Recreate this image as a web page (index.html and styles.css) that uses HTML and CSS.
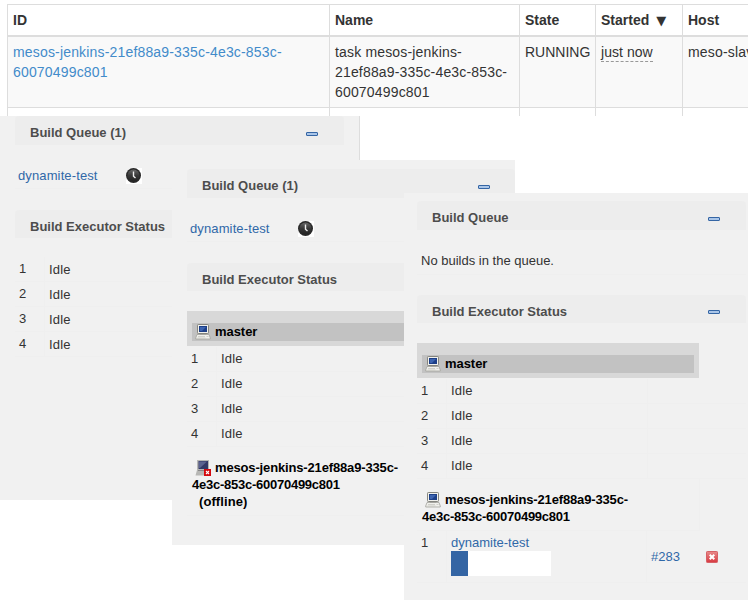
FILE: index.html
```html
<!DOCTYPE html>
<html lang="en">
<head>
<meta charset="utf-8">
<title>Mesos tasks and Jenkins executors</title>
<link rel="stylesheet" href="styles.css">
</head>
<body>
<svg class="defs" width="0" height="0">
  <defs>
    <linearGradient id="face" x1="0" y1="0" x2="0" y2="1"><stop offset="0" stop-color="#666"/><stop offset=".5" stop-color="#383838"/><stop offset="1" stop-color="#222"/></linearGradient>
    <linearGradient id="red" x1="0" y1="0" x2="0" y2="1"><stop offset="0" stop-color="#e88b8b"/><stop offset="1" stop-color="#d73840"/></linearGradient>
    <symbol id="clock" viewBox="0 0 16 16">
      <path d="M8 0h8v16H8z" fill="#fff"/><path d="M0 12h8v4H0z" fill="#fff"/>
      <circle cx="7.5" cy="7.5" r="7.5" fill="#292929"/><circle cx="7.5" cy="7.5" r="6" fill="url(#face)"/>
      <path d="M7.5 3.5v4.8l2 1.7" fill="none" stroke="#eee" stroke-width="1.4"/>
    </symbol>
    <symbol id="pc" viewBox="0 0 16 16">
      <rect x="2.5" y=".5" width="11" height="9" rx=".8" fill="#f1f1ec" stroke="#85857f"/>
      <rect x="4" y="2" width="8" height="6" fill="#1d3f88"/><path d="M5 3h6L7 7H5z" fill="#3d64b0"/>
      <path d="M5 10h6v1H5z" fill="#777"/>
      <path d="M2 10.500h12l1.300 3.500v1H.700v-1z" fill="#f0f0ec" stroke="#a2a29c" stroke-width=".8"/>
      <path d="M3 12.500h7M2.500 14h8M11.500 12.500h2" stroke="#c8c8c2" stroke-width=".8"/>
    </symbol>
    <symbol id="pc-off" viewBox="0 0 16 16">
      <path d="M2 0h12v10l1.500 5.500H.5L2 10z" fill="#b7b7b5"/>
      <rect x="3.500" y="1" width="9.500" height="8" fill="#343966"/><path d="M4 1.500h8L5 8H4z" fill="#5c638f"/>
      <path d="M3 10.500h7" stroke="#888" stroke-width="1"/>
      <rect x="9" y="9" width="7" height="7" fill="#d4080e"/><path d="M11 11l3 3m0-3l-3 3" stroke="#fff" stroke-width="1.100"/>
    </symbol>
    <symbol id="minus" viewBox="0 0 12 4">
      <rect x=".5" y=".5" width="11" height="3" rx=".4" fill="#a9c5e8" stroke="#3465a4"/>
    </symbol>
    <symbol id="stop" viewBox="0 0 12 12">
      <rect x=".5" y=".5" width="11" height="11" rx=".8" fill="url(#red)" stroke="#d66166"/>
      <path d="M3.700 3.700l4.600 4.600m0-4.600L3.700 8.300" stroke="#fff" stroke-width="2"/>
    </symbol>
  </defs>
</svg>

<div class="stage">
  <div class="tasks">
    <div class="th">ID</div><div class="th">Name</div><div class="th">State</div><div class="th">Started <span class="sort">▼</span></div><div class="th">Host</div>
    <div class="td"><a class="task-link">mesos-jenkins-21ef88a9-335c-4e3c-853c-<br>60070499c801</a></div>
    <div class="td">task mesos-jenkins-<br>21ef88a9-335c-4e3c-853c-<br>60070499c801</div>
    <div class="td state">RUNNING</div>
    <div class="td"><span class="ago">just now</span></div>
    <div class="td">meso-slav</div>
    <div class="next"></div><div class="next"></div><div class="next"></div><div class="next"></div><div class="next"></div>
  </div>

  <section class="panel first">
    <h2 class="bar queue">Build Queue (1)<svg class="minus"><use href="#minus"/></svg></h2>
    <div class="job"><a>dynamite-test</a><svg class="clock"><use href="#clock"/></svg></div>
    <h2 class="bar status">Build Executor Status</h2>
    <div class="slots">
      <div class="slot"><span class="num">1</span><span class="what">Idle</span></div>
      <div class="slot"><span class="num">2</span><span class="what">Idle</span></div>
      <div class="slot"><span class="num">3</span><span class="what">Idle</span></div>
      <div class="slot"><span class="num">4</span><span class="what">Idle</span></div>
    </div>
  </section>

  <section class="panel second">
    <h2 class="bar queue">Build Queue (1)<svg class="minus"><use href="#minus"/></svg></h2>
    <div class="job"><a>dynamite-test</a><svg class="clock"><use href="#clock"/></svg></div>
    <h2 class="bar status">Build Executor Status</h2>
    <div class="master"><div class="master-name"><svg class="pc"><use href="#pc"/></svg><span>master</span></div></div>
    <div class="slots">
      <div class="slot"><span class="num">1</span><span class="what">Idle</span></div>
      <div class="slot"><span class="num">2</span><span class="what">Idle</span></div>
      <div class="slot"><span class="num">3</span><span class="what">Idle</span></div>
      <div class="slot"><span class="num">4</span><span class="what">Idle</span></div>
    </div>
    <div class="node"><svg class="pc"><use href="#pc-off"/></svg>mesos-jenkins-21ef88a9-335c-<br><span class="tail">4e3c-853c-60070499c801</span><br><span class="offline">(offline)</span></div>
  </section>

  <section class="panel third">
    <h2 class="bar queue">Build Queue<svg class="minus"><use href="#minus"/></svg></h2>
    <div class="job empty">No builds in the queue.</div>
    <h2 class="bar status">Build Executor Status<svg class="minus"><use href="#minus"/></svg></h2>
    <div class="master"><div class="master-name"><svg class="pc"><use href="#pc"/></svg><span>master</span></div></div>
    <div class="slots">
      <div class="slot"><span class="num">1</span><span class="what">Idle</span><span class="rest"></span></div>
      <div class="slot"><span class="num">2</span><span class="what">Idle</span><span class="rest"></span></div>
      <div class="slot"><span class="num">3</span><span class="what">Idle</span><span class="rest"></span></div>
      <div class="slot"><span class="num">4</span><span class="what">Idle</span><span class="rest"></span></div>
    </div>
    <div class="node"><svg class="pc"><use href="#pc"/></svg>mesos-jenkins-21ef88a9-335c-<br><span class="tail">4e3c-853c-60070499c801</span></div>
    <div class="slot running">
      <span class="num">1</span>
      <div class="what"><a>dynamite-test</a><div class="progress"><div class="done"></div></div></div>
      <div class="rest"><a class="build">#283</a><svg class="stop"><use href="#stop"/></svg></div>
    </div>
  </section>
</div>
</body>
</html>
```
FILE: styles.css
```css
* { box-sizing: border-box; }
body { margin: 0; background: #fff; font-family: "Liberation Sans", Arial, sans-serif; color: #333; }
svg { display: block; flex: none; }
.defs { position: absolute; }
.stage { position: relative; width: 748px; height: 600px; overflow: hidden; }

.tasks { display: grid; grid-template-columns: 322px 190px 76px 87px 120px; grid-template-rows: 33px 71px 8px; margin-left: 7px; padding-top: 4px; height: 116px; font-size: 14px; line-height: 20px; white-space: nowrap; }
.th { border: solid #ddd; border-width: 1px 0 2px 1px; padding: 5px 5px; font-weight: bold; }
.td { border: solid #ddd; border-width: 0 0 1px 1px; padding: 5px 5px; background: #f9f9f9; letter-spacing: .17px; }
.next { border-left: 1px solid #ddd; }
.state { letter-spacing: 0; }
.task-link { color: #428bca; }
.sort { font: 13px/16px "DejaVu Sans", sans-serif; margin-left: 3px; }
.ago { display: inline-block; height: 20px; border-bottom: 1px dashed #999; letter-spacing: .05px; }

.panel { position: absolute; display: flex; flex-direction: column; background: #f1f1f1; font-size: 13px; line-height: 17px; }
.first { left: 0; top: 116px; width: 360px; height: 384px; padding: 0 15px; border-right: 1px solid #ddd; }
.second { left: 172px; top: 160px; width: 343px; height: 385px; padding: 9px 0 0 15px; }
.third { left: 404px; top: 193px; width: 344px; height: 407px; padding: 8px 2px 0 13px; }
.panel a { color: #3068a8; letter-spacing: .12px; }

.bar { display: flex; align-items: center; justify-content: space-between; margin: 0; height: 29px; padding: 5px 26px 0 15px; background: #ededed; border-radius: 4px 4px 0 0; color: #4d4d4d; font-size: 13px; line-height: 17px; }
.queue { padding-top: 3px; }
.status { height: 28px; }
.minus { width: 12px; height: 4px; margin-top: 3px; }
.status .minus { margin-top: 0; }
.second .bar { padding-right: 25px; }
.job { display: flex; height: 44px; margin-bottom: 21px; padding: 22px 0 0 3px; border-bottom: 1px solid #efefef; }
.clock { width: 16px; height: 16px; margin: 1px 0 0 28px; }
.empty { height: 45px; margin-bottom: 20px; padding: 22px 0 0 4px; }
.first .slots { margin-top: 19px; }

.slot { display: flex; height: 25px; border-bottom: 1px solid #efefef; }
.num { width: 30px; padding: 3px 0 0 4px; border-right: 1px solid #efefef; }
.what { width: 200px; padding: 3px 0 0 4px; letter-spacing: .2px; }
.first .num { padding: 3px 0 0 4px; }
.first .what { padding-top: 4px; }

.master { width: 282px; height: 35px; margin-top: 20px; margin-bottom: 1px; padding: 12px 5px 5px; background: #d8d8d8; }
.second .master { width: auto; }
.second .master-name { margin-right: -5px; }
.master-name { display: flex; align-items: flex-start; height: 18px; padding-left: 3px; background: #c2c2c2; color: #000; font-weight: bold; letter-spacing: -.05px; }
.master-name .pc { margin-top: 1px; }
.pc { width: 16px; height: 16px; margin-right: 4px; }
.node { height: 69px; padding: 12px 5px 0; border-bottom: 1px solid #efefef; color: #000; font-weight: bold; letter-spacing: -.15px; white-space: nowrap; }
.node .pc { display: inline-block; margin: 1px 4px 0 3px; vertical-align: top; }
.tail { letter-spacing: -.25px; }
.offline { margin-left: 7px; letter-spacing: .08px; }

.third .node { width: 283px; height: 52px; border-right: 1px solid #efefef; }
.rest { flex: 1; border-left: 1px solid #efefef; }
.running { height: 52px; }
.running .rest { display: flex; align-items: center; padding-left: 4px; margin-left: -1px; }
.running a { display: block; letter-spacing: 0; }
.build { width: 55px; }
.stop { width: 12px; height: 12px; }
.progress { width: 100px; height: 25px; background: #fff; }
.done { width: 17px; height: 25px; background: #3465a4; }
```
